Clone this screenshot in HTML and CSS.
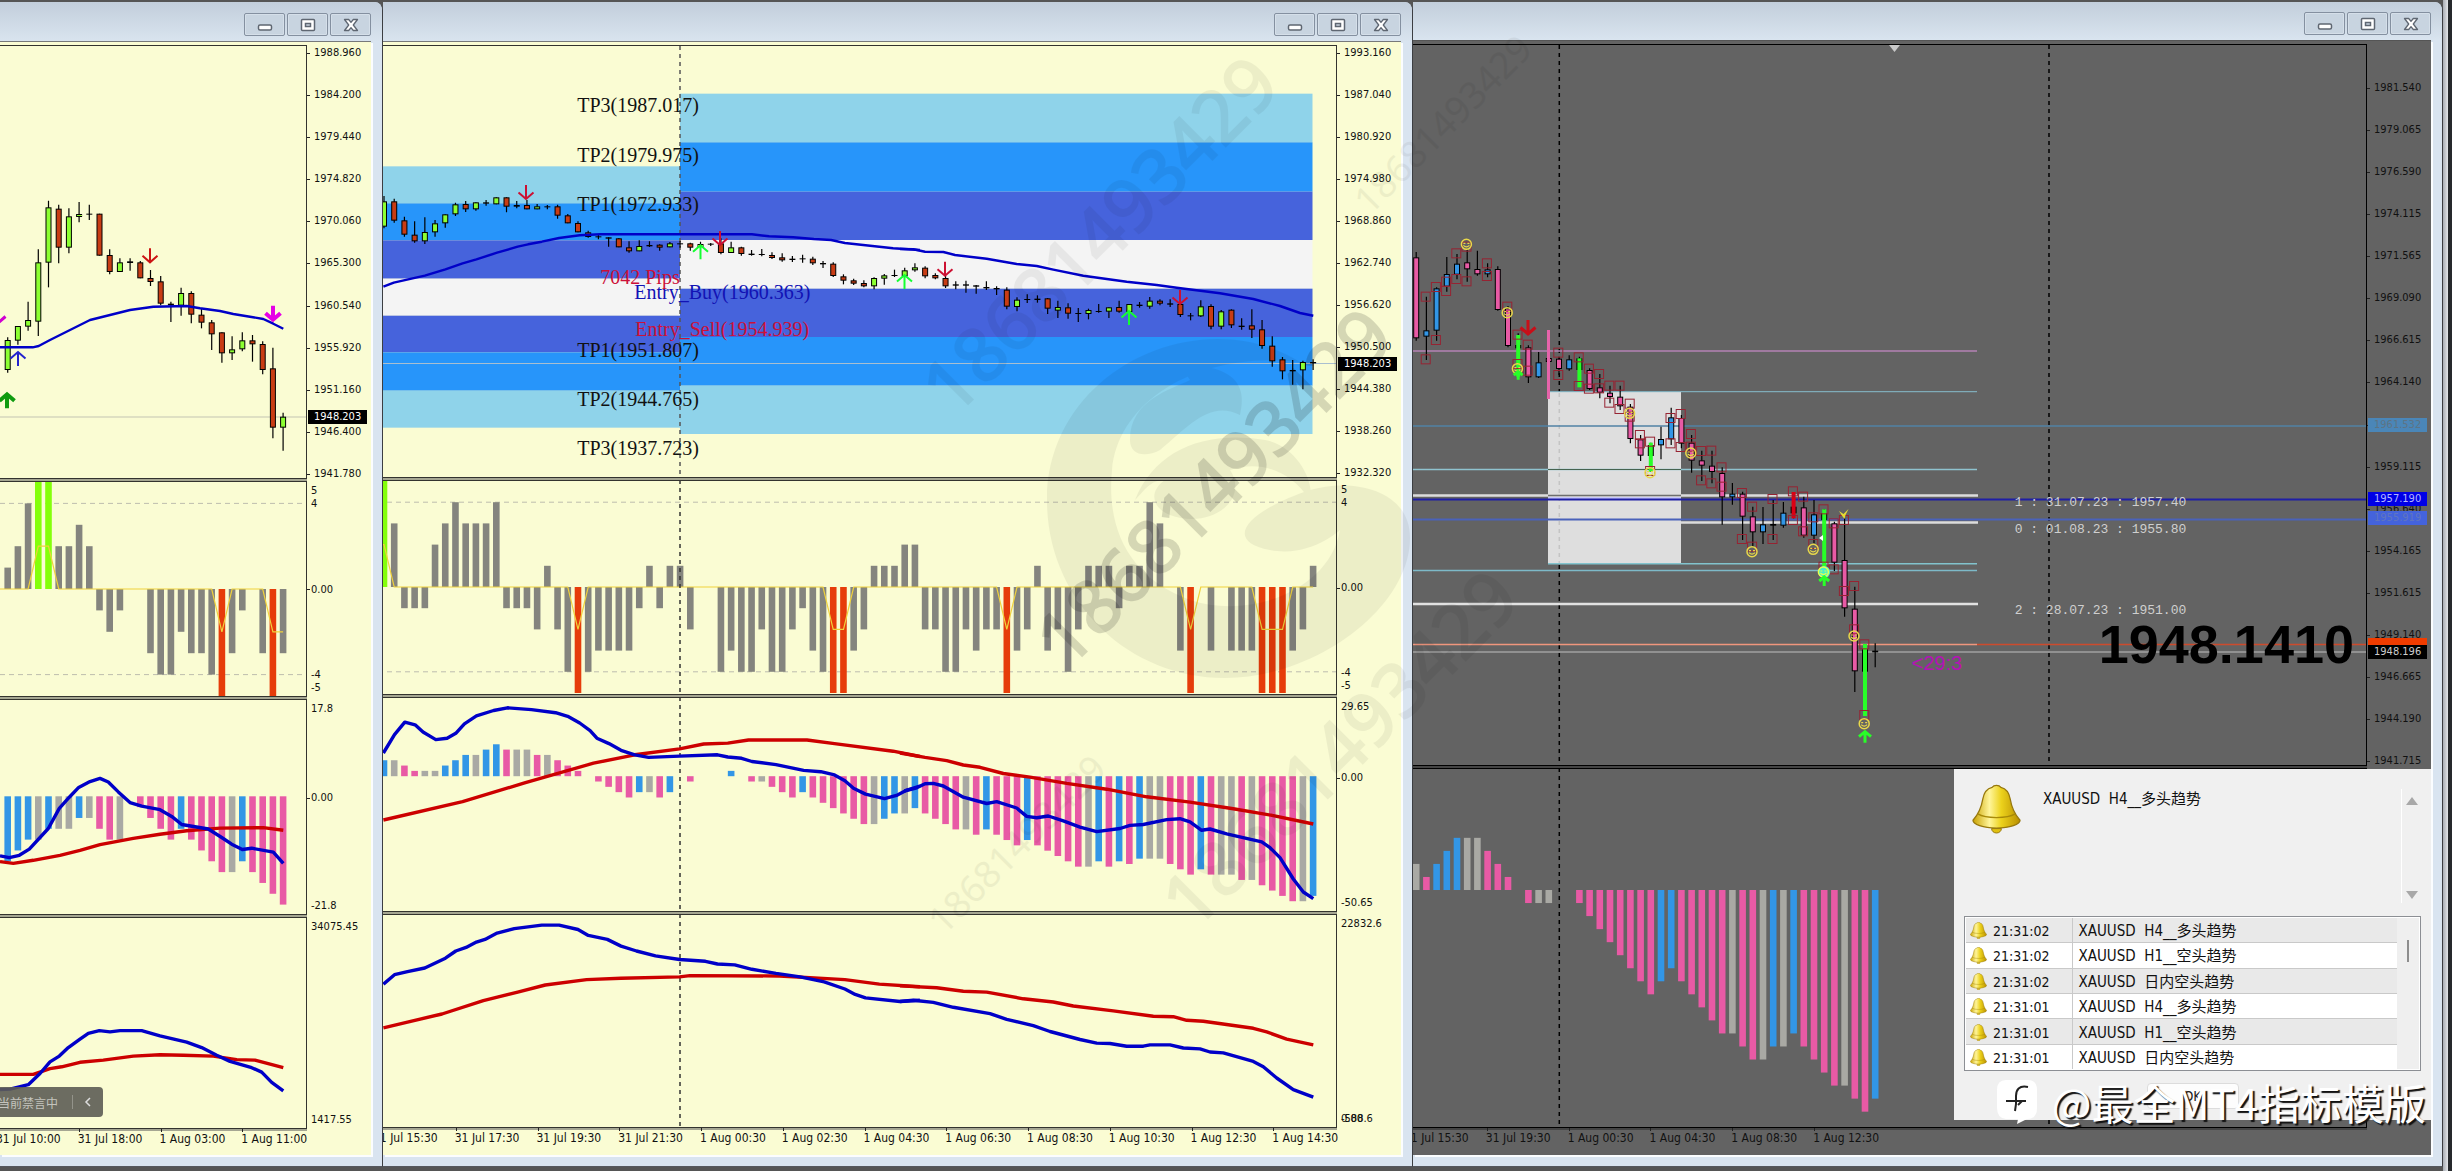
FILE: index.html
```html
<!DOCTYPE html>
<html lang="zh-CN">
<head>
    <meta charset="UTF-8">
    <meta name="viewport" content="width=device-width, initial-scale=1.0">
    <title>XAUUSD</title>
    <link rel="stylesheet" href="styles.css">
</head>
<body>
    <!-- Iconos compartidos -->
    <svg class="icon-defs" aria-hidden="true">
        <defs>
            <linearGradient id="gold" x1="0" x2="1" y1="0" y2="0">
                <stop offset="0" stop-color="#c9a200"/>
                <stop offset="0.35" stop-color="#fff59a"/>
                <stop offset="0.6" stop-color="#ecd21c"/>
                <stop offset="1" stop-color="#b98f00"/>
            </linearGradient>
            <symbol id="icon-min" viewBox="0 0 16 14">
                <rect x="1.5" y="7" width="13" height="5" rx="1.5" fill="#fff" stroke="#5f6772" stroke-width="1.500"/>
            </symbol>
            <symbol id="icon-max" viewBox="0 0 16 14">
                <rect x="1.5" y="1.5" width="13" height="11" rx="1" fill="#fff" stroke="#5f6772" stroke-width="1.500"/>
                <rect x="5.5" y="5.5" width="5" height="3" fill="#c6d1dd" stroke="#5f6772" stroke-width="1.500"/>
            </symbol>
            <symbol id="icon-close" viewBox="0 0 16 14">
                <path d="M1.5 1.5h4.2L8 4.3l2.3-2.8h4.2L10.3 7l4.2 5.5h-4.2L8 9.7l-2.3 2.8H1.5L5.7 7z" fill="#fff" stroke="#5f6772" stroke-width="1.300" stroke-linejoin="round"/>
            </symbol>
            <symbol id="icon-bell" viewBox="0 0 50 50">
                <path d="M20 45a5 4.5 0 0 0 10 0z" fill="#e0c010" stroke="#97780c"/>
                <path d="M25 1c-3 0-4 1.300-4.500 2C14 4.500 12 9 11 15 9.500 24 7 30 1 36.500c0 4 10 8 24 8s24-4 24-8C43 30 40.500 24 39 15 38 9 36 4.500 29.500 3 29 2.300 28 1 25 1z" fill="url(#gold)" stroke="#97780c" stroke-width="1.300"/>
                <path d="M6 30c8 5 30 5 38 0" fill="none" stroke="#a88a08" stroke-width="1.300"/>
            </symbol>
        </defs>
    </svg>

    <div class="workspace">
        <section class="window window-left">
            <header class="title-bar">
                <button class="title-button" aria-label="Minimize"><svg><use href="#icon-min"/></svg></button>
                <button class="title-button" aria-label="Maximize"><svg><use href="#icon-max"/></svg></button>
                <button class="title-button" aria-label="Close"><svg><use href="#icon-close"/></svg></button>
            </header>
            <div class="window-body">
                <div class="panel">
                    <svg class="plot" id="leftPrice" viewBox="0 46 306 432" preserveAspectRatio="none"></svg>
                    <div class="axis price-axis">
                        <span>1988.960</span><span>1984.200</span><span>1979.440</span><span>1974.820</span><span>1970.060</span><span>1965.300</span><span>1960.540</span><span>1955.920</span><span>1951.160</span><span>1946.400</span><span>1941.780</span>
                        <b class="price-tag tag-left">1948.203</b>
                    </div>
                </div>
                <div class="panel">
                    <svg class="plot" id="leftSignal" viewBox="0 482 306 214" preserveAspectRatio="none"></svg>
                    <div class="axis signal-axis"><span>5</span><span>4</span><span class="zero">0.00</span><span class="low">-4</span><span class="last">-5</span></div>
                </div>
                <div class="panel">
                    <svg class="plot" id="leftTrend" viewBox="0 700 306 214" preserveAspectRatio="none"></svg>
                    <div class="axis trend-axis"><span>17.8</span><span class="zero">0.00</span><span class="last">-21.8</span></div>
                </div>
                <div class="panel">
                    <svg class="plot" id="leftVolume" viewBox="0 918 306 210" preserveAspectRatio="none"></svg>
                    <div class="axis volume-axis"><span>34075.45</span><span>1417.55</span></div>
                </div>
                <div class="time-axis"><span>31 Jul 10:00</span><span>31 Jul 18:00</span><span>1 Aug 03:00</span><span>1 Aug 11:00</span></div>
            </div>
            <div class="mute-bar">
                <span>当前禁言中</span>
                <button class="mute-toggle" aria-label="Collapse"><svg viewBox="0 0 8 10"><path d="M6 1 2 5l4 4" fill="none" stroke="#ddd" stroke-width="1.500"/></svg></button>
            </div>
        </section>

        <section class="window window-middle">
            <header class="title-bar">
                <button class="title-button" aria-label="Minimize"><svg><use href="#icon-min"/></svg></button>
                <button class="title-button" aria-label="Maximize"><svg><use href="#icon-max"/></svg></button>
                <button class="title-button" aria-label="Close"><svg><use href="#icon-close"/></svg></button>
            </header>
            <div class="window-body">
                <div class="panel">
                    <svg class="plot" id="midPrice" viewBox="383 46 953 431" preserveAspectRatio="none"></svg>
                    <div class="axis price-axis">
                        <span>1993.160</span><span>1987.040</span><span>1980.920</span><span>1974.980</span><span>1968.860</span><span>1962.740</span><span>1956.620</span><span>1950.500</span><span>1944.380</span><span>1938.260</span><span>1932.320</span>
                        <b class="price-tag tag-middle">1948.203</b>
                    </div>
                    <div class="labels" id="midLabels"></div>
                </div>
                <div class="panel">
                    <svg class="plot" id="midSignal" viewBox="383 481 953 213" preserveAspectRatio="none"></svg>
                    <div class="axis signal-axis"><span>5</span><span>4</span><span class="zero">0.00</span><span class="low">-4</span><span class="last">-5</span></div>
                </div>
                <div class="panel">
                    <svg class="plot" id="midTrend" viewBox="383 698 953 213" preserveAspectRatio="none"></svg>
                    <div class="axis trend-axis"><span>29.65</span><span class="zero">0.00</span><span class="last">-50.65</span></div>
                </div>
                <div class="panel">
                    <svg class="plot" id="midVolume" viewBox="383 915 953 212" preserveAspectRatio="none"></svg>
                    <div class="axis volume-axis"><span>22832.6</span><span class="stacked"><i>0.00</i><i>-588.6</i></span></div>
                </div>
                <div class="time-axis"><span>31 Jul 15:30</span><span>31 Jul 17:30</span><span>31 Jul 19:30</span><span>31 Jul 21:30</span><span>1 Aug 00:30</span><span>1 Aug 02:30</span><span>1 Aug 04:30</span><span>1 Aug 06:30</span><span>1 Aug 08:30</span><span>1 Aug 10:30</span><span>1 Aug 12:30</span><span>1 Aug 14:30</span></div>
            </div>
        </section>

        <section class="window window-right">
            <header class="title-bar">
                <button class="title-button" aria-label="Minimize"><svg><use href="#icon-min"/></svg></button>
                <button class="title-button" aria-label="Maximize"><svg><use href="#icon-max"/></svg></button>
                <button class="title-button" aria-label="Close"><svg><use href="#icon-close"/></svg></button>
            </header>
            <div class="window-body">
                <div class="panel">
                    <svg class="plot" id="rightPrice" viewBox="1413 45 953 720" preserveAspectRatio="none"></svg>
                    <div class="axis price-axis">
                        <span>1981.540</span><span>1979.065</span><span>1976.590</span><span>1974.115</span><span>1971.565</span><span>1969.090</span><span>1966.615</span><span>1964.140</span><span class="covered"></span><span>1959.115</span><span>1956.640</span><span>1954.165</span><span>1951.615</span><span>1949.140</span><span>1946.665</span><span>1944.190</span><span>1941.715</span>
                        <b class="price-tag tag-steel">1961.532</b>
                        <b class="price-tag tag-royal">1955.919</b>
                        <b class="price-tag tag-blue">1957.190</b>
                        <b class="price-tag tag-orange"></b>
                        <b class="price-tag tag-black">1948.196</b>
                    </div>
                    <div class="labels" id="rightLabels"></div>
                </div>
                <div class="panel">
                    <svg class="plot" id="rightTrend" viewBox="1413 769 953 358" preserveAspectRatio="none"></svg>
                    <div class="axis"></div>
                </div>
                <div class="time-axis"><span>31 Jul 15:30</span><span>31 Jul 19:30</span><span>1 Aug 00:30</span><span>1 Aug 04:30</span><span>1 Aug 08:30</span><span>1 Aug 12:30</span></div>
            </div>

            <!-- Alertas -->
            <div class="alert-dialog" role="dialog" aria-label="Alert">
                <div class="alert-head">
                    <svg class="bell-large"><use href="#icon-bell"/></svg>
                    <p class="alert-text">XAUUSD&nbsp; H4__多头趋势</p>
                    <div class="alert-scroll">
                        <button class="scroll-button scroll-up" aria-label="Up"></button>
                        <button class="scroll-button scroll-down" aria-label="Down"></button>
                    </div>
                </div>
                <div class="alert-list">
                    <table class="alert-table">
                        <tbody>
                            <tr><td class="alert-time"><svg><use href="#icon-bell"/></svg>21:31:02</td><td>XAUUSD&nbsp; H4__多头趋势</td></tr>
                            <tr><td class="alert-time"><svg><use href="#icon-bell"/></svg>21:31:02</td><td>XAUUSD&nbsp; H1__空头趋势</td></tr>
                            <tr><td class="alert-time"><svg><use href="#icon-bell"/></svg>21:31:02</td><td>XAUUSD&nbsp; 日内空头趋势</td></tr>
                            <tr><td class="alert-time"><svg><use href="#icon-bell"/></svg>21:31:01</td><td>XAUUSD&nbsp; H4__多头趋势</td></tr>
                            <tr><td class="alert-time"><svg><use href="#icon-bell"/></svg>21:31:01</td><td>XAUUSD&nbsp; H1__空头趋势</td></tr>
                            <tr><td class="alert-time"><svg><use href="#icon-bell"/></svg>21:31:01</td><td>XAUUSD&nbsp; 日内空头趋势</td></tr>
                        </tbody>
                    </table>
                    <div class="list-scroll"></div>
                </div>
                <button class="ok-button">OK</button>
            </div>
        </section>
    </div>

    <!-- Marca de agua -->
    <svg class="watermark" viewBox="0 0 2452 1171" preserveAspectRatio="none" aria-hidden="true">
        <g class="mark-logo">
            <path d="M1300 362C1200 300 1047 370 1047 500c0 100 80 178 178 178 90 0 185-70 185-140 0-50-60-60-100-48-60 20-90 50-40 60 40 8 70-20 70-20-10 60-90 90-150 70-60-22-84-70-78-130C1118 400 1200 350 1300 362z"/>
            <path d="M1130 440c0-40 40-50 60-60l-10-15c40 0 70 10 60 50-30-15-50 10-80 35-15 8-30 5-30-10z"/>
            <path d="M1135 500c20-50 70-70 130-60 30 5 50 40 45 60-20-30-50-40-80-30 20 30-20 60-60 45-20-8-20-25-5-35-15 0-20 10-30 20z"/>
        </g>
        <g class="mark-numbers">
            <text class="mark-big" transform="translate(954 418) rotate(-45)">18681493429</text>
            <text class="mark-big mark-dark" transform="translate(1068 670) rotate(-45)">18681493429</text>
            <text class="mark-big" transform="translate(1194 932) rotate(-45)">18681493429</text>
            <text class="mark-small" transform="translate(944 936) rotate(-45)">18681493429</text>
            <text class="mark-small" transform="translate(1370 216) rotate(-45)">18681493429</text>
        </g>
    </svg>

    <div class="channel">
        <svg class="channel-icon" viewBox="0 0 42 46">
            <path d="M10 1h22q9 0 9 10v18q0 11-10 11l-10 5 1-5H10Q1 39 1 29V11Q1 1 10 1z" fill="#fff"/>
            <path d="M32 8c-9-2-12 3-12 9v8l-1 7M10 22h20M26 22l-4 4" fill="none" stroke="#222" stroke-width="2"/>
        </svg>
        <span class="channel-name">@最全MT4指标模版</span>
    </div>

    <script src="charts.js"></script>
</body>
</html>
```
FILE: styles.css
```css
* {
    box-sizing: border-box;
}

body {
    margin: 0;
    height: 100vh;
    overflow: hidden;
    position: relative;
    background-color: #4a4a4a;
    font-family: "DejaVu Sans Condensed", "Noto Sans CJK SC", sans-serif;
    font-size: 11px;
    color: #111;
}

button {
    font-family: inherit;
    padding: 0;
    cursor: pointer;
}

.icon-defs {
    position: absolute;
    width: 0;
    height: 0;
}

.workspace {
    display: grid;
    grid-template-columns: 383fr 1030fr 1030fr;
    grid-template-rows: 100%;
    height: 100%;
    padding: 2px 9px 4px 0;
    background: linear-gradient(to left, #26292c 4px, #e4e6ea 4px, #a9adb4 9px, #555 9px);
}

/* Ventanas */
.window {
    position: relative;
    display: flex;
    flex-direction: column;
    min-width: 0;
    padding: 0 11px 11px 0;
    overflow: hidden;
    background-color: #d9e4f0;
    border-right: 1px solid #3c3e42;
    border-bottom: 1px solid #55585e;
    border-radius: 0 8px 0 0;
}

.title-bar {
    display: flex;
    justify-content: flex-end;
    gap: 2px;
    flex: 0 0 39px;
    margin-right: -11px;
    padding: 11px 11px 0 0;
    background: linear-gradient(#c2cedb, #d9e4ef);
}

.title-button {
    display: flex;
    align-items: center;
    justify-content: center;
    width: 41px;
    height: 23px;
    background-color: #c8d4e0;
    border: 1px solid #8490a0;
    border-radius: 2px;
    box-shadow: inset 0 0 0 1px #d5dfe9;
}

.title-button svg {
    width: 16px;
    height: 14px;
}

.window-body {
    position: relative;
    flex: 1;
    min-height: 0;
    display: grid;
    row-gap: 2px;
    padding-top: 3px;
    overflow: hidden;
    background-color: #fafcd3;
    border-top: 1px solid #77797a;
    box-shadow: 2px 2px 0 #fbfdff;
}

.window-left .window-body {
    grid-template-rows: 434fr 216fr 216fr 212fr 24px;
}

.window-middle .window-body {
    grid-template-rows: 433fr 215fr 215fr 214fr 25px;
}

.window-right .window-body {
    grid-template-rows: 722fr 360fr 25px;
    background-color: #636363;
    border-top-color: #555;
}

.window-right .title-bar {
    flex-basis: 38px;
    padding-top: 10px;
}

.panel {
    position: relative;
    display: grid;
    grid-template-columns: 1fr 64px;
    min-height: 0;
}

.plot {
    display: block;
    width: 100%;
    height: 100%;
    min-height: 0;
    border: 1px solid #33332e;
    border-left: none;
    box-shadow: 0 2px 0 #a5a692;
}

.window-right .plot {
    border-color: #000;
    box-shadow: 0 2px 0 #444;
}

/* Ejes */
.axis {
    position: relative;
    min-height: 0;
    line-height: 13px;
}

.axis span {
    position: relative;
    padding-left: 4px;
}

.price-axis {
    display: flex;
    flex-direction: column;
    justify-content: space-between;
    padding-top: 3px;
    line-height: 10px;
}

.price-axis span {
    padding-left: 7px;
    height: 10px;
}

.window-right .price-axis {
    padding-top: 39px;
}

.price-axis span::before,
.axis .zero::before {
    content: "";
    position: absolute;
    left: 0;
    top: 50%;
    width: 3px;
    height: 1px;
    background-color: #222;
}

.signal-axis {
    display: grid;
    grid-template-rows: 13px 13px 1fr 13px 1fr 13px 13px;
    padding: 3px 0;
}

.signal-axis .zero {
    grid-row: 4;
}

.signal-axis .low {
    grid-row: 6;
}

.signal-axis .last {
    grid-row: 7;
}

.trend-axis {
    display: grid;
    grid-template-rows: 13px 76fr 13px 95fr 13px;
    padding: 3px 0;
}

.window-middle .trend-axis {
    grid-template-rows: 13px 58fr 13px 112fr 13px;
}

.trend-axis .zero {
    grid-row: 3;
}

.trend-axis .last {
    grid-row: 5;
}

.volume-axis {
    display: flex;
    flex-direction: column;
    justify-content: space-between;
    padding: 3px 0;
}

.stacked {
    display: grid;
}

.stacked i {
    grid-area: 1 / 1;
    font-style: normal;
}

.price-tag {
    position: absolute;
    left: 1px;
    width: 59px;
    height: 14px;
    padding-left: 6px;
    line-height: 14px;
    font-weight: normal;
    color: #fff;
    background-color: #000;
}

.tag-left {
    top: 84%;
}

.tag-middle {
    top: 72%;
}

.tag-steel {
    top: 374px;
    color: #5d7485;
    background-color: #4a86b8;
}

.tag-royal {
    top: 467px;
    color: #5f75c0;
    background-color: #4463dc;
}

.tag-blue {
    top: 448px;
    color: #b4b4ff;
    background-color: #0000e6;
}

.tag-orange {
    top: 594px;
    background-color: #f03c00;
}

.tag-black {
    top: 601px;
    color: #ccc;
}

.time-axis {
    display: flex;
    min-width: 0;
    font-size: 12px;
    line-height: 21px;
    white-space: nowrap;
    margin-top: -2px;
}

.time-axis span {
    position: relative;
    flex: 1 0 0;
    width: 0;
}

.time-axis span::before {
    content: "";
    position: absolute;
    left: 1px;
    top: 0;
    width: 1px;
    height: 3px;
    background-color: #222;
}

.window-left .time-axis {
    margin-left: -4px;
    margin-right: 48px;
}

.window-middle .time-axis {
    margin-left: -10px;
    margin-right: 47px;
}

.window-right .time-axis {
    margin-left: -9px;
    margin-right: 536px;
}

/* Textos sobre los gráficos */
.labels {
    position: absolute;
    inset: 0 64px 0 0;
    pointer-events: none;
}

.labels span {
    position: absolute;
    transform: translateY(-50%);
    white-space: nowrap;
    line-height: 1;
}

.label-level {
    font-family: "Liberation Serif", serif;
    font-size: 20px;
    color: #111;
}

.label-buy {
    color: #1212b4;
}

.label-sell {
    color: #cc1038;
}

.label-day {
    font-family: "Liberation Mono", monospace;
    font-size: 13px;
    color: #cfcfcf;
}

.label-count {
    font-family: "Liberation Sans", sans-serif;
    font-size: 20px;
    color: #b612b6;
}

.label-price {
    font-family: "Liberation Sans", sans-serif;
    font-size: 54px;
    font-weight: bold;
    color: #000;
}

.mute-bar {
    position: absolute;
    left: 0;
    bottom: 49px;
    display: flex;
    align-items: center;
    width: 103px;
    height: 30px;
    font-size: 12px;
    color: #c4c4be;
    background-color: rgba(92, 92, 84, 0.9);
    border-radius: 0 4px 4px 0;
}

.mute-bar span {
    margin-left: -2px;
    width: 74px;
}

.mute-toggle {
    flex: 1;
    height: 14px;
    background: none;
    border: none;
    border-left: 1px solid #93938a;
}

.mute-toggle svg {
    width: 8px;
    height: 10px;
}

/* Ventana de alertas */
.alert-dialog {
    position: absolute;
    right: 11px;
    bottom: 46px;
    width: 477px;
    height: 351px;
    display: flex;
    flex-direction: column;
    align-items: center;
    padding: 15px 10px 11px;
    font-size: 15px;
    background-color: #f0f0f0;
}

.alert-head {
    display: flex;
    align-self: stretch;
    height: 132px;
    padding-left: 8px;
}

.bell-large {
    width: 49px;
    height: 50px;
}

.alert-text {
    flex: 1;
    margin: 3px 0 0 22px;
    line-height: 24px;
}

.alert-scroll {
    display: flex;
    flex-direction: column;
    justify-content: space-between;
    width: 20px;
    height: 114px;
    margin: 5px 0 0;
    padding: 8px 0 4px 4px;
    border-left: 1px solid #fff;
}

.scroll-button {
    width: 0;
    height: 0;
    background: none;
    border: 6px solid transparent;
}

.scroll-up {
    border-top: none;
    border-bottom: 8px solid #a8a8a8;
}

.scroll-down {
    border-bottom: none;
    border-top: 8px solid #a8a8a8;
}

.alert-list {
    display: flex;
    align-self: stretch;
    height: 155px;
    padding: 1px;
    background-color: #fff;
    border: 1px solid #8c8f94;
}

.alert-table {
    flex: 1;
    height: 100%;
    border-collapse: collapse;
}

.alert-table tr:nth-child(odd) {
    background-color: #e9e9e9;
}

.alert-table td {
    padding: 2px 0 0 6px;
    line-height: 20px;
    border-bottom: 1px solid #c9c9c9;
}

.alert-table .alert-time {
    width: 106px;
    padding-left: 4px;
    font-size: 14px;
    border-right: 1px solid #c9c9c9;
}

.alert-table tr:last-child td {
    border-bottom: none;
}

.alert-time svg {
    width: 17px;
    height: 17px;
    margin-right: 6px;
    vertical-align: -3px;
}

.list-scroll {
    width: 22px;
    padding: 22px 0 0 10px;
    background-color: #efefef;
}

.list-scroll::before {
    content: "";
    display: block;
    width: 2px;
    height: 22px;
    background-color: #8d8d8d;
}

.ok-button {
    width: 92px;
    height: 26px;
    margin-top: 12px;
    font-size: 14px;
    color: #222;
    background-color: #fdfdfd;
    border: 1px solid #dcdcdc;
    border-radius: 4px;
}

/* Marca de agua */
.watermark {
    position: absolute;
    inset: 0;
    width: 100%;
    height: 100%;
    pointer-events: none;
}

.mark-logo {
    fill: #000;
    opacity: 0.05;
}

.mark-numbers {
    font-family: "Noto Sans", sans-serif;
    fill: #000;
}

.mark-big {
    font-size: 74px;
    stroke: #000;
    stroke-width: 2px;
    opacity: 0.05;
}

.mark-small {
    font-size: 37px;
    opacity: 0.05;
}

.mark-dark {
    opacity: 0.14;
}

.channel {
    position: absolute;
    right: 26px;
    bottom: 44px;
    display: flex;
    align-items: center;
    gap: 14px;
}

.channel-icon {
    width: 42px;
    height: 46px;
}

.channel-name {
    font-family: "Noto Sans CJK SC", sans-serif;
    font-size: 42px;
    line-height: 50px;
    color: #fff;
    text-shadow: 2px 2px 1px #111;
}
```
FILE: charts.js
```js
const SVG_NS = 'http://www.w3.org/2000/svg';

const COLORS = {
    g: '#8cff32', r: '#c83c14', k: '#000', p: '#e85aa5', b: '#3296e6', s: '#a9a9a4',
    line: '#0000c8', avg: '#cc0000'
};

function add(svg, tag, attrs) {
    const el = document.createElementNS(SVG_NS, tag);
    for (const name in attrs) {
        el.setAttribute(name, attrs[name]);
    }
    svg.appendChild(el);
    return el;
}

function rect(svg, x1, y1, x2, y2, fill) {
    add(svg, 'rect', { x: x1, y: y1, width: x2 - x1, height: y2 - y1, fill: fill });
}

function hline(svg, y, x1, x2, color, width = 1) {
    add(svg, 'line', { x1: x1, x2: x2, y1: y, y2: y, stroke: color, 'stroke-width': width });
}

function dashed(svg, x, y1, y2, color = '#333') {
    add(svg, 'line', { x1: x, x2: x, y1: y1, y2: y2, stroke: color, 'stroke-width': 1.5, 'stroke-dasharray': '4 4' });
}

// series: lista plana x, y, x, y... en unidades de la escala
function curve(svg, series, color, width, scale) {
    const points = [];
    for (let i = 0; i < series.length; i += 2) {
        points.push((scale.x + series[i] / scale.kx).toFixed(1) + ',' + (scale.y + series[i + 1] / scale.ky).toFixed(1));
    }
    add(svg, 'polyline', { points: points.join(' '), fill: 'none', stroke: color, 'stroke-width': width, 'stroke-linejoin': 'round' });
}

// vela: [máximo, techo, base, mínimo, color] en tercios de píxel
function candles(svg, rows, x0, step) {
    rows.forEach((row, i) => {
        if (!row) return;
        const x = x0 + step * i;
        const [high, top, bottom, low, color] = row;
        add(svg, 'line', { x1: x, x2: x, y1: high / 3, y2: low / 3, stroke: '#000', 'stroke-width': 1.2 });
        if (color === 'k') {
            rect(svg, x - 3, top / 3, x + 3, Math.max(bottom / 3, top / 3 + 1), '#000');
        } else {
            add(svg, 'rect', {
                x: x - 2.5, y: top / 3 + 0.5, width: 5, height: Math.max((bottom - top) / 3 - 1, 2),
                fill: COLORS[color], stroke: '#000', 'stroke-width': 1
            });
        }
    });
}

function bars(svg, values, colors, x0, step, zero, unit) {
    values.forEach((v, i) => {
        if (!v) return;
        const x = x0 + step * i;
        const end = zero - v * unit;
        rect(svg, x - 3.3, Math.min(zero, end), x + 3.3, Math.max(zero, end), COLORS[colors[i]]);
    });
}

function signal(svg, values, x0, step, zero, unit, width, last) {
    [4, -4].forEach(level => {
        add(svg, 'line', { x1: 0, x2: x0 + width, y1: zero - level * unit, y2: zero - level * unit, stroke: '#bdbdae', 'stroke-dasharray': '5 4' });
    });
    const points = [];
    values.forEach((v, i) => {
        const x = x0 + step * i;
        const end = zero - v * unit;
        const fill = v === 5 ? '#84ff0a' : v === -5 ? '#e63c0a' : '#84847e';
        if (v) rect(svg, x - 3.3, Math.min(zero, end), x + 3.3, Math.max(zero, end), fill);
        let mark = v === 5 ? 2 : v === -5 ? -2 : 0;
        if (i === values.length - 1) mark = last;
        points.push(x.toFixed(1) + ',' + (zero - mark * unit));
    });
    add(svg, 'polyline', { points: '0,' + (zero - (x0 > 383 ? 2 * unit : 0)) + ' ' + points.join(' '), fill: 'none', stroke: '#f0d23c', 'stroke-width': 1.2 });
}

// flecha de señal, dir 1 = abajo, -1 = arriba; tip es la punta
function arrow(svg, x, tip, dir, color, width = 2, size = 15) {
    const y = tip / 3;
    const w = size / 2;
    add(svg, 'path', {
        d: `M${x} ${y - dir * size}V${y - dir}M${x - w} ${y - dir * w}L${x} ${y - dir}L${x + w} ${y - dir * w}`,
        fill: 'none', stroke: color, 'stroke-width': width
    });
}

function face(svg, x, y, color = '#e8d84a') {
    add(svg, 'circle', { cx: x, cy: y, r: 5, fill: 'none', stroke: color, 'stroke-width': 1.5 });
    add(svg, 'path', { d: `M${x - 3} ${y - 1}h2M${x + 1} ${y - 1}h2M${x - 3} ${y + 1}q3 3 6 0`, fill: 'none', stroke: color, 'stroke-width': 1.2 });
}

function label(box, text, x, y, cls) {
    const view = box.parentNode.querySelector('.plot').viewBox.baseVal;
    const span = document.createElement('span');
    span.textContent = text;
    span.className = cls;
    span.style.left = ((x - view.x) / view.width * 100) + '%';
    span.style.top = ((y - view.y) / view.height * 100) + '%';
    box.appendChild(span);
}

const byId = id => document.getElementById(id);

/* ---------- Ventana izquierda ---------- */
const leftX = 7.7;
const leftStep = 10.2;
const leftTop = { x: 0, y: 0, kx: 3, ky: 3 };
const leftLow = { x: 0, y: 470, kx: 3, ky: 2.237 };

hline(byId('leftPrice'), 417, 0, 306, '#c3c4b2');
candles(byId('leftPrice'), [
    [1012,1020,1110,1118,'g'], [978,978,1022,1034,'g'], [905,960,980,992,'g'], [748,787,965,1008,'g'],
    [602,622,788,862,'g'], [614,626,743,790,'r'], [625,649,743,760,'g'], [606,642,651,667,'g'],
    [614,641,643,660,'k'], [641,641,767,767,'r'], [748,765,816,823,'r'], [775,787,816,816,'g'],
    [775,784,789,812,'k'], [783,787,835,835,'r'], [810,834,846,858,'r'], [828,844,911,916,'r'],
    [905,911,916,966,'k'], [863,879,917,947,'g'], [874,879,944,970,'r'], [925,944,968,985,'r'],
    [960,967,1003,1050,'r'], [997,997,1060,1088,'r'], [1009,1048,1060,1080,'g'], [997,1021,1048,1054,'g'],
    [1005,1021,1033,1085,'r'], [1024,1032,1110,1123,'r'], [1043,1105,1283,1315,'r'], [1238,1250,1283,1352,'g']
], leftX, leftStep);
curve(byId('leftPrice'), [0,1042,98,1042,116,1038,150,1020,270,960,330,945,390,930,460,920,560,918,600,925,660,933,700,942,750,950,790,957,820,971,850,986], COLORS.line, 2.4, leftTop);
arrow(byId('leftPrice'), 150, 790, 1, '#cc1414');
arrow(byId('leftPrice'), 18, 1053, -1, '#2323cd');
arrow(byId('leftPrice'), 7, 1180, -1, '#0f9b0f', 4);
arrow(byId('leftPrice'), 273, 962, 1, '#e600e6', 4);
arrow(byId('leftPrice'), -2, 972, 1, '#d000d0', 3);

signal(byId('leftSignal'), [1,2,4,5,5,2,2,3,2,-1,-2,-1,0,0,-3,-4,-4,-2,-3,-3,-4,-5,-3,-1,0,-3,-5,-3], leftX, leftStep, 589, 21.4, 300, -2);

bars(byId('leftTrend'), [-6,-5,-4,-4,-3,-3,-3,-2,-2,-3,-4,-4,0,-1,-2,-3,-4,-3,-4,-5,-6,-7,-7,-6,-7,-8,-9,-10],
    'bbbsbssbspps.ppppbppppsbpppp', leftX, leftStep, 796.3, 10.83);
curve(byId('leftTrend'), [0,876,40,880,100,873,180,862,240,851,300,838,400,824,480,815,560,807,660,801,790,800,850,806], COLORS.avg, 3.4, leftLow);
curve(byId('leftTrend'), [0,863,28,867,58,862,88,848,145,802,178,757,208,732,236,710,270,697,300,690,325,698,355,720,390,744,425,752,480,760,515,775,545,793,625,803,665,822,695,837,727,849,755,846,820,855,850,880], COLORS.line, 3.4, leftLow);

curve(byId('leftVolume'), [0,1352,100,1352,150,1339,185,1335,240,1325,310,1320,400,1311,480,1308,550,1309,640,1311,710,1319,765,1320,850,1337], COLORS.avg, 3.4, leftLow);
curve(byId('leftVolume'), [0,1386,30,1385,85,1375,120,1350,150,1324,178,1311,205,1292,240,1273,265,1260,298,1254,330,1257,360,1254,425,1254,480,1266,560,1280,605,1292,650,1309,690,1323,755,1337,785,1347,815,1370,850,1389], COLORS.line, 3.4, leftLow);

/* ---------- Ventana central ---------- */
const midX = 384;
const midStep = 10.21;
const midTopA = { x: 380, y: 0, kx: 2.904, ky: 3 };
const midTopB = { x: 900, y: 0, kx: 3, ky: 3 };
const midLowA = { x: 380, y: 470, kx: 2.904, ky: 2.237 };
const midLowB = { x: 900, y: 470, kx: 3, ky: 2.237 };

const midPrice = byId('midPrice');
const bandColors = ['#8fd3ea', '#2795fa', '#4663dc', '#f4f4f4', '#4663dc', '#2795fa', '#8fd3ea'];
[499, 610, 721, 836, 947, 1057, 1172, 1283].forEach((y, i, ys) => {
    if (i < 7) rect(midPrice, 383, y / 3, 680, ys[i + 1] / 3, bandColors[i]);
});
[281, 427, 575, 720, 866, 1011, 1157, 1302].forEach((y, i, ys) => {
    if (i < 7) rect(midPrice, 680, y / 3, 1312.5, ys[i + 1] / 3, bandColors[i]);
});
dashed(midPrice, 680, 46, 478, '#555');
hline(midPrice, 363.5, 383, 1336, '#a9bfd0');
candles(midPrice, [
    [588,604,680,685,'g'], [596,604,662,668,'r'], [650,661,704,710,'r'], [664,704,724,728,'r'], [652,696,724,732,'g'],
    [660,670,697,710,'g'], [643,643,670,683,'g'], [608,613,643,648,'g'], [603,612,628,636,'r'], [607,607,628,632,'g'],
    [600,607,611,617,'k'], [592,592,613,613,'g'], [592,592,620,637,'r'], [603,615,620,625,'k'], [600,615,628,628,'r'],
    [612,619,628,628,'g'], [615,619,621,628,'k'], [614,619,647,656,'r'], [642,646,670,670,'r'], [664,669,697,697,'r'],
    [692,697,711,713,'r'], [704,709,712,718,'k'], [712,712,716,740,'k'], [714,715,742,742,'r'], [724,742,754,758,'r'],
    [721,738,754,754,'g'], [724,735,739,741,'k'], [733,734,742,752,'r'], [726,730,742,742,'g'], [723,730,732,743,'k'],
    [728,730,743,752,'r'], [725,732,738,742,'g'], [729,731,733,738,'k'], [715,730,759,763,'r'], [725,742,759,759,'g'],
    [740,742,762,767,'r'], [750,761,765,767,'k'], [747,762,765,769,'k'], [757,765,774,777,'r'], [760,772,781,785,'r'],
    [768,776,780,786,'k'], [764,775,777,788,'k'], [770,776,790,795,'r'], [783,789,793,804,'k'], [787,791,828,831,'r'],
    [823,829,842,853,'r'], [836,841,851,855,'r'], [841,849,859,862,'r'], [832,834,859,868,'g'], [822,826,836,854,'g'],
    [809,825,828,831,'k'], [803,811,829,829,'g'], [790,802,808,815,'g'], [799,803,829,835,'r'], [820,825,835,838,'r'],
    [828,834,859,864,'r'], [844,853,857,868,'k'], [842,853,857,878,'k'], [855,856,860,881,'k'], [844,861,865,870,'k'],
    [859,864,868,885,'k'], [862,869,920,928,'r'], [892,899,921,934,'g'], [883,897,899,909,'k'], [886,896,900,908,'k'],
    [894,895,926,942,'r'], [902,921,932,954,'g'], [910,922,941,956,'r'], [924,939,941,966,'k'], [926,930,942,958,'g'],
    [912,933,935,938,'k'], [922,922,935,954,'g'], [902,921,935,938,'r'], [912,912,936,940,'g'], [906,914,918,923,'k'],
    [891,902,920,926,'g'], [898,902,911,916,'r'], [898,910,914,921,'k'], [908,912,945,951,'r'], [939,946,949,961,'k'],
    [901,919,949,951,'g'], [913,918,980,988,'r'], [930,934,980,988,'g'], [928,929,976,984,'r'], [955,977,981,989,'k'],
    [928,976,989,1014,'r'], [960,988,1038,1046,'r'], [1009,1037,1084,1100,'r'], [1071,1078,1114,1138,'r'],
    [1080,1110,1114,1154,'k'], [1082,1086,1111,1168,'g'], [1078,1086,1090,1110,'k']
], midX, midStep);
curve(midPrice, [10,860,40,848,130,827,190,808,240,790,280,778,340,758,400,740,430,733,470,725,520,714,580,706,640,703,1080,703,1130,709,1200,712,1260,717,1310,720,1350,729,1430,738,1490,745,1568,750], COLORS.line, 2.4, midTopA);
curve(midPrice, [0,747,40,748,75,755,130,756,165,765,260,776,350,792,410,798,460,809,550,827,680,845,770,855,830,863,960,880,1060,897,1140,918,1200,939,1240,947], COLORS.line, 2.4, midTopB);
[[526, 600], [720, 738], [945, 830], [1180, 915]].forEach(a => arrow(midPrice, a[0], a[1], 1, '#cc1032'));
[[700.5, 733], [904.5, 822], [1129, 930]].forEach(a => arrow(midPrice, a[0], a[1], -1, '#14ff32'));

const midLabels = byId('midLabels');
label(midLabels, 'TP3(1987.017)', 577, 106, 'label-level');
label(midLabels, 'TP2(1979.975)', 577, 155, 'label-level');
label(midLabels, 'TP1(1972.933)', 577, 204, 'label-level');
label(midLabels, '7042 Pips', 600, 277, 'label-level label-sell');
label(midLabels, 'Entry_Buy(1960.363)', 634, 292, 'label-level label-buy');
label(midLabels, 'Entry_Sell(1954.939)', 635, 329, 'label-level label-sell');
label(midLabels, 'TP1(1951.807)', 577, 350, 'label-level');
label(midLabels, 'TP2(1944.765)', 577, 398, 'label-level');
label(midLabels, 'TP3(1937.723)', 577, 447, 'label-level');

signal(byId('midSignal'), [
    5,3,-1,-1,-1,2,3,4,3,3,3,4,-1,-1,-1,-2,1,-2,-4,-5,-4,-3,-3,-3,-3,-1,1,-1,1,1,-2,0,0,-4,-3,-4,-4,-2,-4,-4,
    -2,-1,-3,-4,-5,-5,-3,-2,1,1,1,2,2,-2,-2,-4,-4,-2,-3,-2,-2,-5,-3,-2,1,-3,-2,-4,-2,1,1,1,-1,1,1,4,3,0,-3,-5,
    0,-3,0,-3,-3,-3,-5,-5,-5,-3,-2,1
], midX, midStep, 587, 21.2, 960, 0);
dashed(byId('midSignal'), 680, 480, 696);

bars(byId('midTrend'), [
    3,3,2,1,1,1,2,3,4,4,5,6,5,5,5,4,4,3,2,1,0,-1,-2,-3,-4,-3,-3,-4,-3,0,-1,0,0,0,1,0,-1,-1,-2,-3,
    -4,-3,-4,-5,-6,-7,-8,-9,-9,-8,-7,-7,-6,-7,-8,-9,-10,-10,-11,-10,-11,-12,-13,-12,-13,-14,-15,-16,-17,-17,
    -16,-17,-16,-16.5,-15.5,-15.5,-15.5,-16.5,-17.5,-18.5,-17.5,-18.5,-18.5,-18.5,-19.5,-19.5,-20.5,-21.5,-22.5,-23.5,-23.5,-22.5
], 'bsppssbbbsbbpsspsppp.ppppbspb.p...b.pspppbppppppsbbsbppppspbpppbpppppsbpbpbssp' + 'ppbpssps' + 'ppppsb', midX, midStep, 776.2, 5.32);
dashed(byId('midTrend'), 680, 697, 912);
const midTrend = byId('midTrend');
curve(midTrend, [10,783,240,742,420,700,620,656,740,637,870,624,940,613,1010,611,1070,604,1240,604,1320,612,1490,629,1568,641], COLORS.avg, 3.4, midLowA);
curve(midTrend, [0,633,75,643,140,650,190,660,240,665,310,679,390,687,500,701,620,714,740,731,870,743,1000,758,1120,773,1240,792], COLORS.avg, 3.4, midLowB);
curve(midTrend, [10,633,42,592,72,564,102,570,125,586,162,603,195,600,220,589,245,568,280,550,330,538,370,532,440,536,510,543,545,551,580,566,610,583,630,600,665,612,700,627,740,637,780,643,870,640,980,637,1010,642,1050,645,1080,652,1150,659,1230,672,1280,675,1320,682,1350,695,1375,712,1410,725,1465,735,1500,728,1530,716,1568,707], COLORS.line, 3.4, midLowA);
curve(midTrend, [13,718,50,711,75,702,100,701,130,707,190,732,260,746,290,742,350,756,380,775,410,778,445,774,490,785,540,799,590,809,660,802,690,795,730,793,800,782,840,780,870,787,905,806,930,803,980,814,1085,832,1110,845,1140,867,1180,915,1210,944,1240,959], COLORS.line, 3.4, midLowB);

const midVolume = byId('midVolume');
dashed(midVolume, 680, 914, 1128);
curve(midVolume, [10,1248,80,1235,180,1217,300,1187,400,1168,480,1152,600,1140,700,1137,870,1134,900,1131,1160,1132,1350,1140,1450,1150,1568,1156], COLORS.avg, 3.4, midLowA);
curve(midVolume, [0,1154,110,1158,190,1166,260,1168,370,1183,460,1190,520,1199,640,1210,760,1222,820,1223,860,1231,910,1233,1060,1249,1100,1257,1160,1273,1240,1286], COLORS.avg, 3.4, midLowB);
curve(midVolume, [10,1150,42,1129,80,1122,130,1114,190,1092,220,1076,250,1068,280,1056,305,1050,340,1036,390,1026,470,1018,520,1018,575,1028,605,1041,660,1050,700,1065,745,1076,800,1087,870,1095,945,1099,980,1105,1030,1107,1080,1117,1150,1126,1220,1134,1290,1145,1350,1161,1380,1173,1410,1181,1510,1189,1568,1186], COLORS.line, 3.4, midLowA);
curve(midVolume, [0,1189,40,1186,100,1191,160,1202,270,1216,320,1229,400,1243,450,1256,540,1274,590,1282,630,1283,680,1289,730,1289,750,1286,810,1286,850,1293,900,1295,930,1302,970,1304,1060,1323,1090,1335,1130,1360,1180,1386,1240,1403], COLORS.line, 3.4, midLowB);

/* ---------- Ventana derecha ---------- */
const rightX = 1416.2;
const rightStep = 10.2;
const rightPrice = byId('rightPrice');
const col = i => rightX + rightStep * i;

dashed(rightPrice, 1559.3, 45, 766, '#000');
dashed(rightPrice, 2049, 45, 766, '#000');
rect(rightPrice, 1548, 392, 1681, 564, '#dedede');
dashed(rightPrice, 1559.3, 393, 563, '#c4c4c4');
hline(rightPrice, 351, 1413, 1977, '#b482b4', 1.5);
hline(rightPrice, 391.7, 1548, 1977, '#87bdcd');
hline(rightPrice, 426, 1413, 2366, '#5082a5', 1.5);
hline(rightPrice, 469.5, 1413, 1977, '#8fc3cf', 1.5);
hline(rightPrice, 469.5, 1548, 1681, '#466450');
hline(rightPrice, 495.5, 1413, 1978, '#dcdcdc', 2.5);
hline(rightPrice, 495.5, 1548, 1681, '#6e6e6e', 1.5);
hline(rightPrice, 498, 1548, 1681, '#c8c8fa', 2);
hline(rightPrice, 499.5, 1413, 2366, '#1e1ea5', 2);
hline(rightPrice, 519.5, 1413, 2366, '#4a62ba', 2);
hline(rightPrice, 522.5, 1681, 1978, '#dcdcdc', 2.5);
hline(rightPrice, 563.7, 1548, 1977, '#82c3cd', 1.5);
hline(rightPrice, 570.5, 1413, 1977, '#7db9c8', 1.5);
hline(rightPrice, 604, 1413, 1978, '#e1e1e1', 2.5);
hline(rightPrice, 644.5, 1413, 1977, '#f0967d', 1.5);
hline(rightPrice, 644.5, 1977, 2366, '#cd4b2d', 1.5);
hline(rightPrice, 652, 1413, 2366, '#a0a0a0', 1.5);
add(rightPrice, 'path', { d: 'M1889 45h11l-5.500 7z', fill: '#c8c8c8' });

candles(rightPrice, [
    [756,772,1015,1022,'p'], [890,991,1010,1080,'b'], [862,865,992,1022,'b'], [771,822,860,875,'b'], [762,791,824,838,'b'],
    [748,787,808,845,'p'], [752,807,823,827,'p'], [790,808,823,832,'b'], [799,807,930,932,'p'], [918,925,1038,1042,'p'],
    [1000,1035,1045,1130,'k'], [1036,1042,1132,1149,'p'], [1056,1087,1132,1134,'b'], [1074,1074,1086,1086,'p'],
    [1070,1076,1107,1125,'p'], [1066,1078,1108,1112,'b'], [1070,1075,1110,1160,'k'], [1105,1110,1167,1170,'p'],
    [1122,1162,1178,1195,'p'], [1157,1178,1191,1210,'p'], [1157,1190,1219,1230,'p'], [1212,1220,1317,1330,'p'],
    [1305,1318,1367,1383,'p'], [1328,1335,1368,1415,'k'], [1280,1317,1336,1378,'b'], [1223,1252,1318,1335,'b'],
    [1245,1254,1331,1345,'p'], [1305,1328,1382,1418,'p'], [1352,1381,1397,1443,'p'], [1352,1397,1416,1450,'p'],
    [1402,1419,1492,1574,'p'], [1449,1481,1492,1514,'b'], [1475,1481,1550,1620,'p'], [1520,1549,1597,1640,'p'],
    [1521,1573,1597,1632,'b'], [1500,1572,1577,1620,'k'], [1506,1538,1577,1583,'b'], [1476,1520,1540,1555,'k'],
    [1490,1522,1607,1613,'p'], [1500,1543,1607,1630,'b'], [1528,1540,1560,1700,'k'], [1565,1570,1688,1713,'p'],
    [1555,1680,1825,1850,'p'], [1760,1826,2014,2076,'p'], [1932,1948,2015,2148,'k'], [1930,1952,1957,2002,'k']
], rightX, rightStep);

// barras de impulso
[[10, 1005, 1130, '#28ff28'], [16, 1075, 1162, '#28ff28'], [23, 1328, 1415, '#28ff28'], [37, 1476, 1555, '#dc0014'],
 [40, 1528, 1700, '#28ff28'], [44, 1932, 2148, '#28ff28']].forEach(m => {
    rect(rightPrice, col(m[0]) - 2, m[1] / 3, col(m[0]) + 2, m[2] / 3, m[3]);
});
rect(rightPrice, 1547, 330, 1550, 399, '#e664aa');

// fractales
[[1,890],[1,1078],[2,861],[2,1020],[3,845],[3,873],[4,760],[4,837],[5,740],[5,844],[7,790],[7,828],[9,920],[10,1004],
 [10,1092],[11,1034],[11,1112],[14,1058],[14,1125],[16,1072],[16,1158],[17,1106],[17,1166],[18,1122],[18,1165],[19,1157],
 [19,1208],[20,1157],[20,1227],[21,1211],[21,1250],[22,1305],[22,1330],[23,1325],[23,1413],[25,1254],[25,1330],[26,1242],
 [26,1341],[27,1302],[27,1340],[28,1353],[28,1441],[29,1352],[29,1450],[30,1402],[30,1460],[32,1479],[32,1617],[33,1520],
 [33,1640],[35,1497],[35,1617],[37,1474],[37,1560],[38,1490],[38,1594],[39,1552],[39,1632],[40,1528],[40,1700],[41,1570],
 [41,1708],[42,1560],[42,1773],[43,1758],[43,1888],[44,1933],[44,2145]].forEach(f => {
    add(rightPrice, 'rect', { x: col(f[0]) - 5.2, y: f[1] / 3 - 4.5, width: 9, height: 9, fill: 'none', stroke: '#962332' });
});

[[5,733],[9,938],[10,1106],[21,1240],[23,1418],[27,1359],[33,1655],[39,1648],[43,1908],[44,2171]].forEach(f => {
    face(rightPrice, col(f[0]) - 0.8, f[1] / 3);
});
add(rightPrice, 'circle', { cx: col(40), cy: 572, r: 6, fill: '#46f0c8' });
face(rightPrice, col(40) - 0.8, 572, '#e6ff50');
arrow(rightPrice, 1528, 1005, 1, '#c80f19', 3);
arrow(rightPrice, col(10), 1112, -1, '#28ff28', 3, 9);
arrow(rightPrice, col(40), 1728, -1, '#28ff28', 3, 10);
arrow(rightPrice, col(44), 2192, -1, '#28ff28', 3, 12);
add(rightPrice, 'path', { d: 'M1839 511l4.500 3 5-5-3 6-1 4-3-4z', fill: '#e6dc32' });
add(rightPrice, 'path', { d: 'M1819 538l4-3v6z', fill: '#fff' });

const rightLabels = byId('rightLabels');
label(rightLabels, '1 : 31.07.23 : 1957.40', 2014, 502, 'label-day');
label(rightLabels, '0 : 01.08.23 : 1955.80', 2014, 529, 'label-day');
label(rightLabels, '2 : 28.07.23 : 1951.00', 2014, 609, 'label-day');
label(rightLabels, '<29:3', 1911, 662, 'label-count');
label(rightLabels, '1948.1410', 2098, 643, 'label-price');

const rightTrend = byId('rightTrend');
dashed(rightTrend, 1559.3, 768, 1128, '#000');
dashed(rightTrend, 2049, 768, 1128, '#000');
bars(rightTrend, [
    2,1,2,3,4,4,4,3,2,1,0,-1,-1,-1,0,0,-1,-2,-3,-4,-5,-6,-7,-8,-7,-6,-7,-8,-9,-10,-11,-11,-12,-13,-13,-12,-12,-11,
    -12,-13,-14,-15,-15,-16,-17,-16
], 'spbbbssppp.pss..ppppppppbbpppppsppsbsbppppsppb', rightX, rightStep, 890, 13.04);
```
